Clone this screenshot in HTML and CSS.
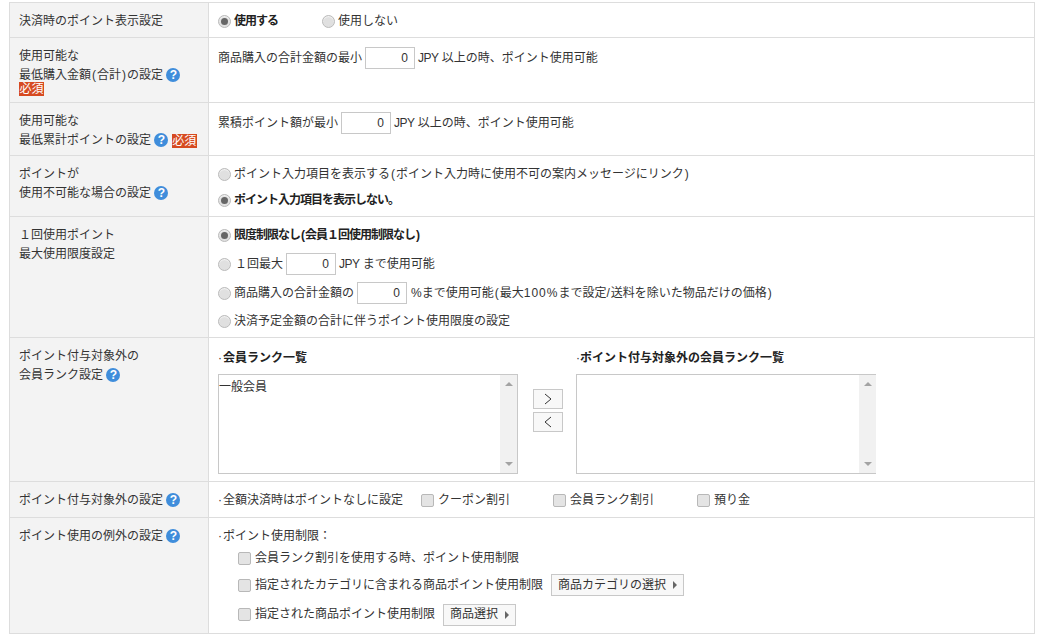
FILE: index.html
```html
<!DOCTYPE html>
<html lang="ja">
<head>
<meta charset="utf-8">
<title>ポイント設定</title>
<link rel="stylesheet" href="styles.css">
</head>
<body>
<table class="form">
<tr class="r1">
  <th>決済時のポイント表示設定</th>
  <td><div class="line"><label class="opt wide"><i class="radio on"></i><b class="tight">使用する</b></label><label class="opt"><i class="radio"></i>使用しない</label></div></td>
</tr>
<tr class="r2">
  <th>使用可能な<br>最低購入金額<span class="p">(</span>合計<span class="p">)</span>の設定 <i class="help">?</i><em class="req block">必須</em></th>
  <td class="top"><div class="line">商品購入の合計金額の最小<span class="num">0</span><span class="jpy">JPY</span>&nbsp;以上の時、ポイント使用可能</div></td>
</tr>
<tr class="r3">
  <th>使用可能な<br>最低累計ポイントの設定 <i class="help">?</i> <em class="req">必須</em></th>
  <td class="top"><div class="line">累積ポイント額が最小<span class="num">0</span><span class="jpy">JPY</span>&nbsp;以上の時、ポイント使用可能</div></td>
</tr>
<tr class="r4">
  <th>ポイントが<br>使用不可能な場合の設定 <i class="help">?</i></th>
  <td class="s4">
    <label class="opt"><i class="radio"></i>ポイント入力項目を表示する<span class="p">(</span>ポイント入力時に使用不可の案内メッセージにリンク<span class="p">)</span></label>
    <label class="opt"><i class="radio on"></i><b class="tight">ポイント入力項目を表示しない。</b></label>
  </td>
</tr>
<tr class="r5">
  <th>１回使用ポイント<br>最大使用限度設定</th>
  <td class="s5">
    <label class="opt"><i class="radio on"></i><b class="tight">限度制限なし<span class="p">(</span>会員１回使用制限なし<span class="p">)</span></b></label>
    <label class="opt once"><i class="radio"></i>１回最大<span class="num">0</span><span class="jpy">JPY</span>&nbsp;まで使用可能</label>
    <label class="opt"><i class="radio"></i>商品購入の合計金額の<span class="num">0</span><span class="pct">%</span>まで使用可能<span class="p">(</span>最大<span class="wide-latin">100%</span>まで設定<span class="wide-latin">/</span>送料を除いた物品だけの価格<span class="p">)</span></label>
    <label class="opt short"><i class="radio"></i>決済予定金額の合計に伴うポイント使用限度の設定</label>
  </td>
</tr>
<tr class="r6">
  <th>ポイント付与対象外の<br>会員ランク設定 <i class="help">?</i></th>
  <td class="top">
    <div class="transfer">
      <div class="col">
        <div class="coltitle"><span class="dot">·</span><b>会員ランク一覧</b></div>
        <div class="listbox"><div class="items">一般会員</div><div class="bar"><i class="up"></i><i class="down"></i></div></div>
      </div>
      <div class="moves">
        <span class="move"><svg width="8" height="12" viewBox="0 0 8 12"><path d="M1 1l6 5-6 5" fill="none" stroke="#333"/></svg></span>
        <span class="move"><svg width="8" height="12" viewBox="0 0 8 12"><path d="M7 1L1 6l6 5" fill="none" stroke="#333"/></svg></span>
      </div>
      <div class="col">
        <div class="coltitle">·<b>ポイント付与対象外の会員ランク一覧</b></div>
        <div class="listbox open"><div class="items"></div><div class="bar"><i class="up"></i><i class="down"></i></div></div>
      </div>
    </div>
  </td>
</tr>
<tr class="r7">
  <th>ポイント付与対象外の設定 <i class="help">?</i></th>
  <td><div class="line"><span class="dot">·</span>全額決済時はポイントなしに設定<label class="chk c1"><i class="box"></i>クーポン割引</label><label class="chk c2"><i class="box"></i>会員ランク割引</label><label class="chk"><i class="box"></i>預り金</label></div></td>
</tr>
<tr class="r8">
  <th>ポイント使用の例外の設定 <i class="help">?</i></th>
  <td class="top">
    <div class="line"><span class="dot">·</span>ポイント使用制限：</div>
    <div class="sub">
      <label class="chk l1"><i class="box"></i>会員ランク割引を使用する時、ポイント使用制限</label>
      <label class="chk l2"><i class="box"></i>指定されたカテゴリに含まれる商品ポイント使用制限<span class="btn">商品カテゴリの選択<i class="tri"></i></span></label>
      <label class="chk l3"><i class="box"></i>指定された商品ポイント使用制限<span class="btn">商品選択<i class="tri"></i></span></label>
    </div>
  </td>
</tr>
</table>
</body>
</html>
```
FILE: styles.css
```css
* { box-sizing: border-box; }
html, body { margin: 0; padding: 0; background: #fff; }
body {
  padding: 2px 10px 0 9px;
  font: 12px/19px "Liberation Sans", "Noto Sans CJK JP", "Noto Sans", sans-serif;
  color: #333;
  overflow: hidden;
}
i, em { font-style: normal; }
b { color: #222; }
.tight { letter-spacing: -1px; }
.p { margin: 0 1px; }
.jpy { letter-spacing: -0.5px; }
.pct { margin-left: 1px; }
.wide-latin { letter-spacing: 1px; }
.dot { margin-right: 1px; }
.form { width: 1026px; border-collapse: collapse; table-layout: fixed; }
.form th, .form td { border: 1px solid #ddd; vertical-align: middle; }
.form th {
  width: 199px;
  padding: 9px 9px 0;
  background: #f3f3f3;
  font-weight: normal;
  text-align: left;
  vertical-align: top;
}
.form td { padding: 2px 9px 0; }
.form td.top { vertical-align: top; }
.r1 { height: 35px; }
.r2 { height: 65px; }
.r2 td { padding-top: 8px; }
.r3 { height: 53px; }
.r3 td { padding-top: 8px; }
.r4 { height: 61px; }
.r5 { height: 121px; }
.r6 { height: 144px; }
.r6 td { padding-top: 11px; }
.r7 { height: 36px; }
.r8 { height: 116px; }
.r8 td { padding-top: 9px; }
.line { display: flex; align-items: center; min-height: 24px; white-space: nowrap; }
.r8 .line { min-height: 19px; }
.opt { display: flex; align-items: center; white-space: nowrap; }
.opt.wide { width: 104px; }
.s4 .opt { height: 26px; }
.s5 .opt { height: 29px; }
.s5 .opt.short { height: 28px; }
.radio {
  flex: none;
  width: 13px;
  height: 13px;
  margin-right: 3px;
  border: 1px solid #bbb;
  border-radius: 50%;
  background: #e0e0e0;
  box-shadow: inset 0 1px 1px #f4f4f4;
  display: flex;
  align-items: center;
  justify-content: center;
}
.once .radio { margin-right: 4px; }
.radio.on::before {
  content: "";
  width: 7px;
  height: 7px;
  border-radius: 50%;
  background: #666;
}
.num {
  flex: none;
  width: 50px;
  height: 22px;
  margin: 0 3px;
  padding-right: 6px;
  border: 1px solid #c8c8c8;
  background: #fff;
  line-height: 20px;
  text-align: right;
}
.help {
  display: inline-block;
  width: 14px;
  height: 14px;
  margin-top: 2px;
  border-radius: 50%;
  background: #3f8ddb;
  color: #fff;
  font: bold 12px/14px "Liberation Sans", sans-serif;
  text-align: center;
  vertical-align: top;
}
.req {
  display: inline-block;
  width: 25px;
  height: 14px;
  margin-top: 3px;
  background: #d64a21;
  color: #fff;
  font-size: 12px;
  line-height: 14px;
  text-align: center;
  white-space: nowrap;
  vertical-align: top;
}
.req.block { display: block; margin-top: -3px; }
.transfer { display: flex; align-items: flex-start; }
.col { width: 300px; flex: none; }
.coltitle { height: 25px; white-space: nowrap; }
.listbox {
  display: flex;
  height: 100px;
  border: 1px solid #c8c8c8;
}
.listbox.open { border-right: 0; }
.items { flex: 1; padding: 3px 0 0 0; }
.bar {
  width: 17px;
  background: #f1f1f1;
  display: flex;
  flex-direction: column;
  justify-content: space-between;
  align-items: center;
  padding: 7px 0;
}
.up { border: 4px solid transparent; border-top: 0; border-bottom: 4px solid #a3a3a3; }
.down { border: 4px solid transparent; border-bottom: 0; border-top: 4px solid #a3a3a3; }
.moves {
  width: 58px;
  flex: none;
  padding: 40px 0 0 15px;
  display: flex;
  flex-direction: column;
  gap: 3px;
}
.move {
  width: 30px;
  height: 20px;
  border: 1px solid #c8c8c8;
  background: #f8f8f8;
  display: flex;
  align-items: center;
  justify-content: center;
}
.chk { display: flex; align-items: center; white-space: nowrap; }
.box {
  flex: none;
  width: 13px;
  height: 13px;
  margin-right: 4px;
  border: 1px solid #b8b8b8;
  border-radius: 2px;
  background: #e4e4e4;
}
.r7 .chk { margin-left: 18px; }
.r7 .chk.c1 { width: 114px; }
.r7 .chk.c2 { width: 126px; }
.sub { padding-left: 20px; }
.l1 { height: 25px; }
.l2 { height: 28px; }
.l3 { height: 31px; }
.btn {
  display: inline-flex;
  align-items: center;
  height: 22px;
  margin-left: 8px;
  padding: 0 6px;
  border: 1px solid #c8c8c8;
  background: #f8f8f8;
}
.tri {
  margin-left: 7px;
  border: 4px solid transparent;
  border-right: 0;
  border-left: 4px solid #666;
}
```
